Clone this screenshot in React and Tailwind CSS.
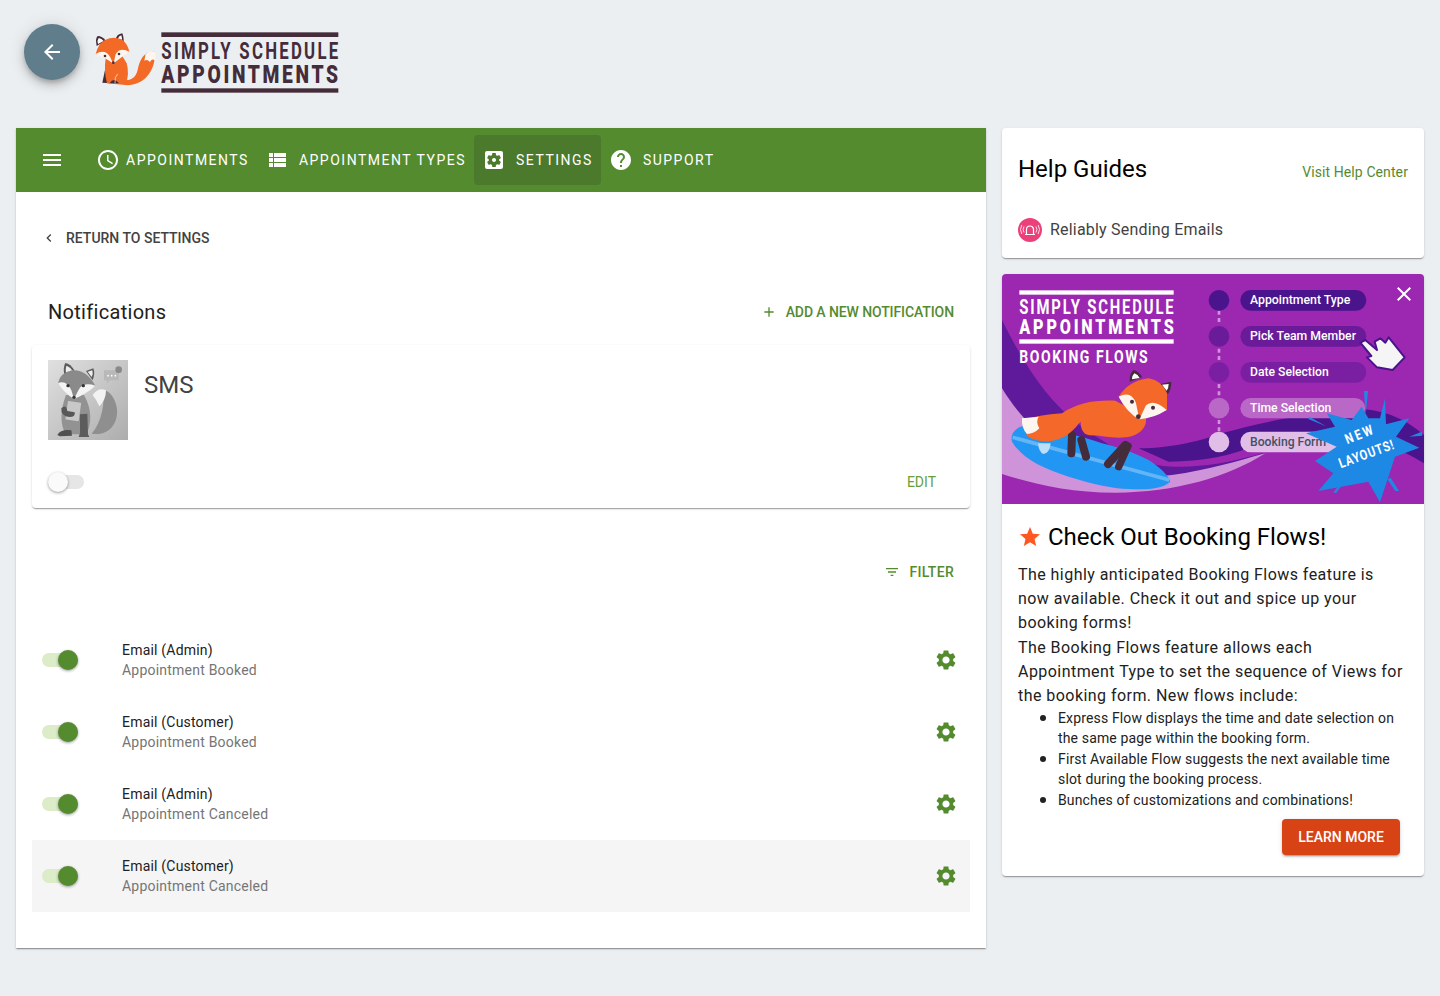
import React from 'react';

const cardShadow = 'shadow-[0_2px_1px_-1px_rgba(0,0,0,0.2),0_1px_1px_0_rgba(0,0,0,0.14),0_1px_3px_0_rgba(0,0,0,0.12)]';

const icons = {
  menu: 'M3 18h18v-2H3v2zm0-5h18v-2H3v2zm0-7v2h18V6H3z',
  clock: 'M11.99 2C6.47 2 2 6.48 2 12s4.47 10 9.99 10C17.52 22 22 17.52 22 12S17.52 2 11.99 2zM12 20c-4.42 0-8-3.58-8-8s3.58-8 8-8 8 3.58 8 8-3.58 8-8 8zm.5-13H11v6l5.25 3.15.75-1.23-4.5-2.67z',
  list: 'M4 14h4v-4H4v4zm0 5h4v-4H4v4zM4 9h4V5H4v4zm5 5h12v-4H9v4zm0 5h12v-4H9v4zM9 5v4h12V5H9z',
  settingsApp: 'M12 10c-1.1 0-2 .9-2 2s.9 2 2 2 2-.9 2-2-.9-2-2-2zm7-7H5c-1.11 0-2 .9-2 2v14c0 1.1.89 2 2 2h14c1.11 0 2-.9 2-2V5c0-1.1-.89-2-2-2zm-1.75 9c0 .23-.02.46-.05.68l1.48 1.16c.13.11.17.3.08.45l-1.4 2.42c-.09.15-.27.21-.43.15l-1.74-.7c-.36.28-.76.51-1.18.69l-.26 1.85c-.03.17-.18.3-.35.3h-2.8c-.17 0-.32-.13-.35-.29l-.26-1.85c-.43-.18-.82-.41-1.18-.69l-1.74.7c-.16.06-.34 0-.43-.15l-1.4-2.42c-.09-.15-.05-.34.08-.45l1.48-1.16c-.03-.23-.05-.46-.05-.69 0-.23.02-.46.05-.68l-1.48-1.16c-.13-.11-.17-.3-.08-.45l1.4-2.42c.09-.15.27-.21.43-.15l1.74.7c.36-.28.76-.51 1.18-.69l.26-1.85c.03-.17.18-.3.35-.3h2.8c.17 0 .32.13.35.29l.26 1.85c.43.18.82.41 1.18.69l1.74-.7c.16-.06.34 0 .43.15l1.4 2.42c.09.15.05.34-.08.45l-1.48 1.16c.03.23.05.46.05.69z',
  help: 'M12 2C6.48 2 2 6.48 2 12s4.48 10 10 10 10-4.48 10-10S17.52 2 12 2zm1 17h-2v-2h2v2zm2.07-7.75l-.9.92C13.45 12.9 13 13.5 13 15h-2v-.5c0-1.1.45-2.1 1.17-2.83l1.24-1.26c.37-.36.59-.86.59-1.41 0-1.1-.9-2-2-2s-2 .9-2 2H8c0-2.21 1.79-4 4-4s4 1.79 4 4c0 .88-.36 1.68-.93 2.25z',
  gear: 'M19.14 12.94c.04-.3.06-.61.06-.94 0-.32-.02-.64-.07-.94l2.03-1.58c.18-.14.23-.41.12-.61l-1.92-3.32c-.12-.22-.37-.29-.59-.22l-2.39.96c-.5-.38-1.03-.7-1.62-.94l-.36-2.54c-.04-.24-.24-.41-.48-.41h-3.84c-.24 0-.43.17-.47.41l-.36 2.54c-.59.24-1.13.57-1.62.94l-2.39-.96c-.22-.08-.47 0-.59.22L2.74 8.87c-.12.21-.08.47.12.61l2.03 1.58c-.05.3-.09.63-.09.94s.02.64.07.94l-2.03 1.58c-.18.14-.23.41-.12.61l1.92 3.32c.12.22.37.29.59.22l2.39-.96c.5.38 1.03.7 1.62.94l.36 2.54c.05.24.24.41.48.41h3.84c.24 0 .44-.17.47-.41l.36-2.54c.59-.24 1.13-.56 1.62-.94l2.39.96c.22.08.47 0 .59-.22l1.92-3.32c.12-.22.07-.47-.12-.61l-2.01-1.58zM12 15.6c-1.98 0-3.6-1.62-3.6-3.6s1.62-3.6 3.6-3.6 3.6 1.62 3.6 3.6-1.62 3.6-3.6 3.6z',
  back: 'M20 11H7.83l5.59-5.59L12 4l-8 8 8 8 1.41-1.41L7.83 13H20v-2z',
  chevron: 'M15.41 7.41L14 6l-6 6 6 6 1.41-1.41L10.83 12z',
  plus: 'M19 13h-6v6h-2v-6H5v-2h6V5h2v6h6v2z',
  filter: 'M10 18h4v-2h-4v2zM3 6v2h18V6H3zm3 7h12v-2H6v2z',
  close: 'M19 6.41L17.59 5 12 10.59 6.41 5 5 6.41 10.59 12 5 17.59 6.41 19 12 13.41 17.59 19 19 17.59 13.41 12z',
  star: 'M12 17.27L18.18 21l-1.64-7.03L22 9.24l-7.19-.61L12 2 9.19 8.63 2 9.24l5.46 4.73L5.82 21z',
};

function Icon({ name, className }) {
  return (
    <svg viewBox="0 0 24 24" className={className} fill="currentColor">
      <path d={icons[name]} />
    </svg>
  );
}

function Logo() {
  const dark = '#452c3a';
  return (
    <svg viewBox="285 96 735 186" className="h-[62px] w-[245px]">
      <g transform="translate(285 90)">
        <path d="M88 165 C140 170 182 130 180 66 C150 62 135 85 128 120 C122 145 105 152 92 150 Z" fill="#f26a25" />
        <path d="M148 92 L152 72 Q165 60 180 66 Q182 80 180 92 Q172 84 165 96 Q156 86 148 92 Z" fill="#fdf6ee" />
        <path d="M5 48 Q0 25 8 18 Q22 18 32 32 Z" fill={dark} />
        <path d="M9 42 Q6 30 11 24 Q20 25 26 33 Z" fill="#fff" />
        <path d="M62 28 Q65 12 82 10 Q88 25 85 45 Z" fill={dark} />
        <path d="M68 28 Q71 18 79 16 Q82 26 81 38 Z" fill="#fff" />
        <path d="M30 120 L22 158 L45 160 L40 130 Z" fill={dark} />
        <path d="M32 85 Q26 125 36 160 L92 165 Q104 130 95 100 L82 78 Z" fill="#f26a25" />
        <path d="M44 160 Q56 140 72 160 Z" fill={dark} />
        <path d="M60 160 Q58 140 68 132" fill="none" stroke="#fdf6ee" strokeWidth="2" />
        <path d="M2 72 Q10 40 30 30 Q55 18 80 28 Q98 42 103 65 Q80 72 60 100 L52 100 Q40 78 2 72 Z" fill="#f26a25" />
        <path d="M2 72 Q30 55 45 80 L54 100 Q30 82 2 72 Z" fill="#fdf6ee" />
        <path d="M103 65 Q75 50 62 72 L56 100 Q78 82 103 65 Z" fill="#fdf6ee" />
        <circle cx="30" cy="78" r="4" fill={dark} />
        <circle cx="72" cy="72" r="4" fill={dark} />
        <circle cx="55" cy="98" r="4" fill={dark} />
      </g>
      <rect x="484" y="97" width="531" height="14" fill={dark} />
      <rect x="484" y="265" width="531" height="13" fill={dark} />
      <text transform="translate(484 178) scale(0.72 1)" textLength="737" lengthAdjust="spacing" fill={dark} fontFamily="Roboto, sans-serif" fontWeight="700" fontSize="70">SIMPLY SCHEDULE</text>
      <text transform="translate(484 248) scale(0.76 1)" textLength="698" lengthAdjust="spacing" fill={dark} fontFamily="Roboto, sans-serif" fontWeight="900" fontSize="76">APPOINTMENTS</text>
    </svg>
  );
}

function GrayFox() {
  return (
    <svg viewBox="54 45 240 240" className="h-20 w-20 shrink-0">
      <defs>
        <linearGradient id="smsbg" x1="0" y1="0" x2="1" y2="1">
          <stop offset="0" stopColor="#e0e0e0" />
          <stop offset="1" stopColor="#adadad" />
        </linearGradient>
      </defs>
      <rect x="54" y="45" width="240" height="240" fill="url(#smsbg)" />
      <path d="M185 266 C240 275 268 230 260 185 C254 155 236 136 218 134 C226 170 216 230 185 266 Z" fill="#8f8f8f" />
      <path d="M188 150 Q205 126 228 136 Q228 165 208 184 Q200 165 188 150 Z" fill="#f2f2f2" />
      <path d="M108 150 C92 190 88 240 108 268 L168 268 C186 240 186 190 162 150 Z" fill="#929292" />
      <path d="M82 270 Q92 252 124 256 L126 272 L90 274 Z" fill="#505050" />
      <path d="M150 208 L172 206 L174 268 L178 276 L146 276 L150 264 Z" fill="#5c5c5c" />
      <path d="M104 96 Q98 66 106 54 Q122 56 134 78 Z" fill="#5c5c5c" />
      <path d="M109 88 Q105 70 110 62 Q120 66 128 78 Z" fill="#eee" />
      <path d="M168 78 L190 70 Q196 84 188 106 Z" fill="#5c5c5c" />
      <path d="M173 80 L187 76 Q190 86 185 96 Z" fill="#eee" />
      <path d="M84 114 Q90 84 126 76 Q168 72 196 122 Q166 130 134 162 Q106 136 84 114 Z" fill="#8a8a8a" />
      <path d="M84 114 Q110 104 124 136 L132 162 Q104 146 84 114 Z" fill="#f4f4f4" />
      <path d="M196 122 Q160 110 146 134 L132 162 Q170 146 196 122 Z" fill="#f4f4f4" />
      <circle cx="114" cy="122" r="5" fill="#333" />
      <circle cx="160" cy="122" r="5" fill="#333" />
      <circle cx="132" cy="157" r="5" fill="#333" />
      <rect x="110" y="170" width="40" height="56" rx="2" fill="#c8c8c8" transform="rotate(8 128 198)" />
      <path d="M94 190 Q108 176 112 198 L134 202 Q138 216 118 216 Q92 214 94 190 Z" fill="#585858" />
      <path d="M222 76 L266 76 L266 106 L238 106 L232 116 L230 106 L222 106 Z" fill="#b8b8b8" />
      <circle cx="234" cy="92" r="2.6" fill="#fff" />
      <circle cx="245" cy="92" r="2.6" fill="#fff" />
      <circle cx="256" cy="92" r="2.6" fill="#fff" />
      <circle cx="266" cy="74" r="10" fill="#8a8a8a" />
    </svg>
  );
}

function BannerArt() {
  const pills = [
    { y: 60, h: 62, c: '#4a148c', label: 'Appointment Type', tc: '#fff', w: 378, len: 301 },
    { y: 168, h: 62, c: '#6a1b9a', label: 'Pick Team Member', tc: '#fff', w: 378, len: 318 },
    { y: 276, h: 62, c: '#7b1fa2', label: 'Date Selection', tc: '#fff', w: 378, len: 236 },
    { y: 384, h: 61, c: '#ba68c8', label: 'Time Selection', tc: '#fff', w: 375, len: 244 },
    { y: 485, h: 62, c: '#e1bee7', label: 'Booking Form', tc: '#455060', w: 375, len: 228 },
  ];
  const dark = '#452c3a';
  return (
    <svg viewBox="0 12 1266 690" className="block h-[230px] w-[422px]">
      <rect x="0" y="0" width="1266" height="702" fill="#9c27b0" />
      <path d="M0 150 C60 270 130 390 240 470 C340 540 420 590 520 590 C640 590 700 570 790 548 C660 620 500 640 330 630 C170 610 60 480 0 355 Z" fill="#5e1a9a" />
      <path d="M410 535 C520 535 600 510 660 490 C760 460 900 435 1000 420 C1100 405 1190 430 1266 495 L1266 580 C1190 530 1090 500 1000 495 C920 480 850 495 780 520 C680 560 600 575 500 575 Z" fill="#4a148c" />
      <path d="M0 355 C40 420 90 480 200 560 C330 620 420 625 510 615 C620 600 700 575 790 550 C680 620 520 668 340 668 C200 668 90 640 0 612 Z" fill="#ce93d8" />

      {[122, 236, 342, 450].map((y) => (
        <line key={y} x1="651" y1={y} x2="651" y2={y + 40} stroke="#ce93d8" strokeWidth="8" strokeDasharray="12 10" />
      ))}
      {pills.map((p) => (
        <g key={p.label}>
          <circle cx="651" cy={p.y + p.h / 2} r="31" fill={p.c} />
          <rect x="715" y={p.y} width={p.w} height={p.h} rx="31" fill={p.c} />
          <text x="744" y={p.y + 42} textLength={p.len} lengthAdjust="spacingAndGlyphs" fill={p.tc} fontFamily="Roboto, sans-serif" fontWeight="500" fontSize="36">{p.label}</text>
        </g>
      ))}

      <rect x="52" y="61" width="463" height="13" fill="#fff" />
      <rect x="52" y="208" width="463" height="13" fill="#fff" />
      <text transform="translate(52 132) scale(0.72 1)" textLength="643" lengthAdjust="spacing" fill="#fff" fontFamily="Roboto, sans-serif" fontWeight="700" fontSize="62">SIMPLY SCHEDULE</text>
      <text transform="translate(52 192) scale(0.78 1)" textLength="594" lengthAdjust="spacing" fill="#fff" fontFamily="Roboto, sans-serif" fontWeight="900" fontSize="62">APPOINTMENTS</text>
      <text transform="translate(52 280) scale(0.75 1)" textLength="513" lengthAdjust="spacing" fill="#fff" fontFamily="Roboto, sans-serif" fontWeight="700" fontSize="56">BOOKING FLOWS</text>

      <g transform="translate(0 270)">
        <path d="M55 200 C35 210 25 225 30 245 C60 295 120 325 200 350 C270 372 330 385 380 387 C430 390 480 388 505 365 C500 345 470 320 440 300 C390 275 340 260 300 250 C240 230 180 215 130 205 C100 198 75 195 55 200 Z" fill="#2196f3" />
        <path d="M32 232 L502 360" stroke="#64b5f6" strokeWidth="11" />
        <path d="M108 250 L146 250 Q142 282 124 282 Q110 276 108 250 Z" fill="#bbdefb" />
        <path d="M210 225 L208 280" stroke={dark} strokeWidth="24" strokeLinecap="round" />
        <path d="M238 240 L252 290" stroke={dark} strokeWidth="24" strokeLinecap="round" />
        <path d="M370 255 L318 312" stroke={dark} strokeWidth="24" strokeLinecap="round" />
        <path d="M378 258 L350 320" stroke={dark} strokeWidth="22" strokeLinecap="round" />
        <path d="M60 180 Q110 165 180 160 C225 130 270 120 340 122 L430 170 C440 195 415 228 370 232 C330 236 300 226 262 226 C248 222 236 215 236 185 C225 195 222 205 195 225 C160 248 110 252 75 228 Z" fill="#f4682a" />
        <path d="M60 175 L110 170 Q100 185 112 205 Q96 222 75 222 Q58 205 60 175 Z" fill="#fdf6ee" />
        <path d="M383 65 Q382 40 395 30 Q412 35 420 52 Z" fill={dark} />
        <path d="M390 58 Q390 46 397 40 Q408 44 413 54 Z" fill="#fff" />
        <path d="M475 72 L508 65 Q508 88 497 103 Z" fill={dark} />
        <path d="M480 74 L500 72 Q500 84 494 92 Z" fill="#fff" />
        <path d="M350 110 Q380 62 440 55 Q480 62 495 100 L495 150 L412 182 Q372 150 350 110 Z" fill="#f4682a" />
        <path d="M350 110 Q388 90 402 130 L412 178 Q375 158 350 110 Z" fill="#fdf6ee" />
        <path d="M494 150 Q455 115 432 136 L412 178 Q455 175 494 150 Z" fill="#fdf6ee" />
        <circle cx="390" cy="125" r="6" fill={dark} />
        <circle cx="453" cy="143" r="6" fill={dark} />
        <circle cx="409" cy="170" r="7" fill={dark} />
      </g>

      <path d="M1075 218 L1090 210 L1125 240 L1118 215 L1135 205 L1150 218 L1160 202 L1208 262 L1172 300 L1125 292 L1095 262 L1108 258 Z" fill="#f5f5f5" stroke="#4a148c" strokeWidth="6" strokeLinejoin="round" />

      <g transform="translate(894 345)">
        <path d="M255 40 L258 118 L328 100 L288 155 L358 188 L285 215 L240 352 L205 290 L55 318 L100 265 L45 228 L110 185 L18 145 L105 125 L80 85 L155 105 L185 65 L205 100 L240 100 Z" fill="#1e88e5" />
        <path d="M192 18 L204 18 L197 90 Z" fill="#1e88e5" />
        <path d="M28 95 L25 102 L78 124 Z" fill="#1e88e5" />
        <path d="M328 155 L365 140 L367 152 Z" fill="#1e88e5" />
        <path d="M262 283 L272 278 L297 318 L286 318 Z" fill="#1e88e5" />
        <path d="M128 288 L100 322 L108 325 L130 295 Z" fill="#1e88e5" />
        <text transform="translate(142 178) rotate(-22) scale(0.8 1)" textLength="108" lengthAdjust="spacing" fill="#fff" fontFamily="Roboto, sans-serif" fontWeight="700" fontSize="42">NEW</text>
        <text transform="translate(122 250) rotate(-20) scale(0.8 1)" textLength="216" lengthAdjust="spacing" fill="#fff" fontFamily="Roboto, sans-serif" fontWeight="700" fontSize="42">LAYOUTS!</text>
      </g>
    </svg>
  );
}

function NavItem({ icon, label, gap, active }) {
  return (
    <div className={`flex h-[50px] items-center rounded px-2 ${gap} ${active ? 'bg-[#4c7a2c]' : ''}`}>
      <Icon name={icon} className="h-6 w-6" />
      <span className="text-sm tracking-[1.5px]">{label}</span>
    </div>
  );
}

function Toggle({ on }) {
  return (
    <div className={`relative h-3.5 w-9 rounded-full ${on ? 'bg-[#dcebc8]' : 'bg-[#e6e6e6]'}`}>
      <div
        className={`absolute -top-[3px] h-5 w-5 rounded-full shadow-[0_1px_3px_rgba(0,0,0,0.4)] ${on ? 'right-0 bg-[#558b2f]' : 'left-0 bg-[#fafafa]'}`}
      />
    </div>
  );
}

const rows = [
  { title: 'Email (Admin)', sub: 'Appointment Booked' },
  { title: 'Email (Customer)', sub: 'Appointment Booked' },
  { title: 'Email (Admin)', sub: 'Appointment Canceled' },
  { title: 'Email (Customer)', sub: 'Appointment Canceled', hover: true },
];

export default function App() {
  return (
    <div className="min-h-[996px] bg-[#eceff1] px-4 [font-family:Roboto,sans-serif]">
      <header className="flex h-32 items-start gap-[15px] pl-2 pt-6">
        <div className="flex h-14 w-14 items-center justify-center rounded-full bg-[#607d8b] text-white shadow-[0_3px_5px_-1px_rgba(0,0,0,0.2),0_6px_10px_0_rgba(0,0,0,0.14),0_1px_18px_0_rgba(0,0,0,0.12)]">
          <Icon name="back" className="h-6 w-6" />
        </div>
        <div className="pt-2">
          <Logo />
        </div>
      </header>

      <div className="flex items-start gap-4">
        <main className={`w-[970px] bg-white ${cardShadow}`}>
          <nav className="flex h-16 items-center bg-[#558b2f] pl-6 text-white">
            <Icon name="menu" className="mr-6 h-6 w-6" />
            <NavItem icon="clock" label="APPOINTMENTS" gap="gap-1.5" />
            <NavItem icon="list" label="APPOINTMENT TYPES" gap="gap-2.5" />
            <NavItem icon="settingsApp" label="SETTINGS" gap="gap-2.5" active />
            <NavItem icon="help" label="SUPPORT" gap="gap-2.5" />
          </nav>

          <div className="px-4 pb-9">
            <div className="flex h-[92px] items-center gap-[9px] pl-[9px] text-sm font-medium text-[#424242]">
              <Icon name="chevron" className="h-4 w-4" />
              <span>RETURN TO SETTINGS</span>
            </div>

            <div className="flex h-[61px] items-center justify-between px-4 pb-[5px]">
              <h2 className="text-xl font-normal tracking-[0.3px] text-[#212121]">Notifications</h2>
              <div className="flex items-center gap-[9px] text-sm font-medium tracking-[-0.1px] text-[#558b2f]">
                <Icon name="plus" className="h-4 w-4" />
                <span>ADD A NEW NOTIFICATION</span>
              </div>
            </div>

            <section className={`rounded bg-white ${cardShadow}`}>
              <div className="flex gap-4 px-4 pt-[15px]">
                <GrayFox />
                <div className="pt-[7px] text-2xl leading-9 text-[#424242]">SMS</div>
              </div>
              <div className="mt-4 flex h-[52px] items-center justify-between pb-[0px] pl-4 pr-[34px]">
                <Toggle />
                <span className="text-sm text-[#689f38]">EDIT</span>
              </div>
            </section>

            <div className="flex h-[116px] items-center justify-end gap-[9px] pr-4 pt-3 text-sm font-medium tracking-[0.3px] text-[#558b2f]">
              <Icon name="filter" className="h-4 w-4" />
              <span>FILTER</span>
            </div>

            <ul>
              {rows.map((r) => (
                <li key={r.title + r.sub} className={`flex h-[72px] items-center pl-2.5 pr-3 ${r.hover ? 'bg-[#f5f5f5]' : ''}`}>
                  <Toggle on />
                  <div className="ml-11 flex-1 text-sm leading-5">
                    <div className="tracking-[0.2px] text-[#212121]">{r.title}</div>
                    <div className="tracking-[0.22px] text-[#757575]">{r.sub}</div>
                  </div>
                  <Icon name="gear" className="h-6 w-6 text-[#558b2f]" />
                </li>
              ))}
            </ul>
          </div>
        </main>

        <aside className="flex w-[422px] flex-col gap-4">
          <section className={`h-[130px] rounded bg-white px-4 ${cardShadow}`}>
            <div className="flex h-[82px] items-center justify-between">
              <h2 className="text-2xl font-normal text-black">Help Guides</h2>
              <a className="pt-[6px] text-sm tracking-[0.1px] text-[#558b2f]">Visit Help Center</a>
            </div>
            <div className="mt-2 flex items-center gap-2">
              <svg viewBox="0 0 24 24" className="h-6 w-6">
                <circle cx="12" cy="12" r="12" fill="#ec407a" />
                <path d="M8.5 16v-4.5a3.5 3.5 0 0 1 7 0V16M7 16.5h10" fill="none" stroke="#fff" strokeWidth="1.2" />
                <path d="M6 8.5a6 6 0 0 0 0 6M3.8 7a9 9 0 0 0 0 9M18 8.5a6 6 0 0 1 0 6M20.2 7a9 9 0 0 1 0 9" fill="none" stroke="#fff" strokeWidth="0.8" />
              </svg>
              <span className="text-base tracking-[0.2px] text-[#424242]">Reliably Sending Emails</span>
            </div>
          </section>

          <section className={`relative h-[602px] overflow-hidden rounded bg-white ${cardShadow}`}>
            <BannerArt />
            <Icon name="close" className="absolute right-[8px] top-[8px] h-6 w-6 text-white" />
            <div className="px-4">
              <div className="flex h-[66px] items-center gap-1.5">
                <Icon name="star" className="h-6 w-6 text-[#ff5722]" />
                <h3 className="text-2xl font-normal text-black">Check Out Booking Flows!</h3>
              </div>
              <p className="-mt-[7px] text-base leading-6 tracking-[0.45px] text-[#212121]">
                The highly anticipated Booking Flows feature is now available. Check it out and spice up your booking forms!
              </p>
              <p className="mt-px text-base leading-6 tracking-[0.45px] text-[#212121]">
                The Booking Flows feature allows each Appointment Type to set the sequence of Views for the booking form. New flows include:
              </p>
              <ul className="-mt-px list-disc pl-10 text-sm leading-5 tracking-[0.15px] text-[#212121] marker:text-[18px]">
                <li>Express Flow displays the time and date selection on the same page within the booking form.</li>
                <li>First Available Flow suggests the next available time slot during the booking process.</li>
                <li>Bunches of customizations and combinations!</li>
              </ul>
              <div className="flex justify-end pr-2 pt-[9px]">
                <button className="h-9 w-[118px] rounded bg-[#d84315] text-sm font-medium text-white shadow-[0_3px_1px_-2px_rgba(0,0,0,0.2),0_2px_2px_0_rgba(0,0,0,0.14),0_1px_5px_0_rgba(0,0,0,0.12)]">
                  LEARN MORE
                </button>
              </div>
            </div>
          </section>
        </aside>
      </div>
    </div>
  );
}
